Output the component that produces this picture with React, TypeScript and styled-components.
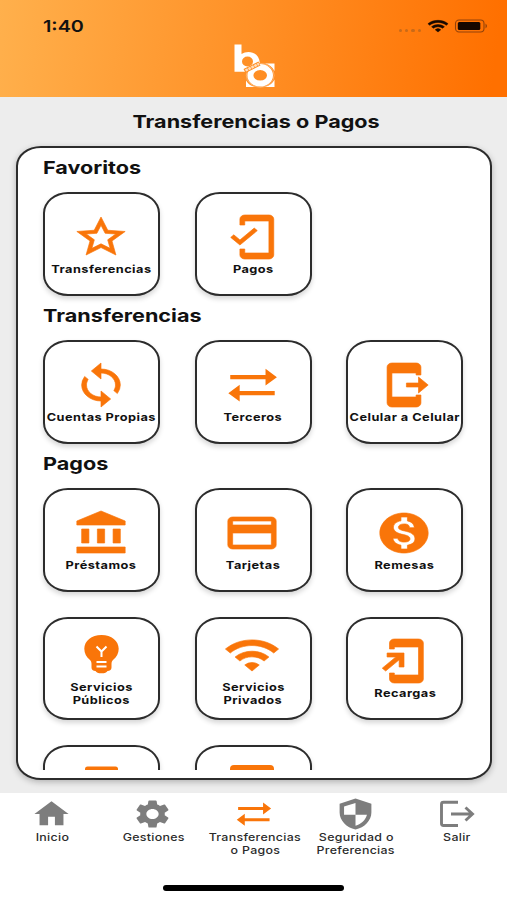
import React from "react";
import styled, { createGlobalStyle } from "styled-components";
import {
  MdMobileFriendly, MdLoop, MdSendToMobile, MdAccountBalance, MdOutlineCreditCard,
  MdMonetizationOn, MdAddToHomeScreen, MdWifi, MdHome, MdSettings, MdStarOutline,
} from "react-icons/md";

const ORANGE = "#f97509";
const GRAY = "#7d7d7d";

const Global = createGlobalStyle`
  *, *::before, *::after { box-sizing: border-box; }
  body { margin: 0; background: #ededed; font-family: Inter, "Liberation Sans", sans-serif; color: #111; }
`;

const Screen = styled.div`
  width: 507px;
  height: 900px;
  display: flex;
  flex-direction: column;
  overflow: hidden;
`;

const Header = styled.header`
  height: 97px;
  flex: none;
  display: flex;
  flex-direction: column;
  align-items: center;
  background: linear-gradient(97deg, #ffb04c 0%, #ff9127 48%, #ff7000 97%);
`;

const StatusBar = styled.div`
  width: 100%;
  height: 43px;
  padding: 10px 18px 0 43px;
  display: flex;
  justify-content: space-between;
`;

const StatusIcons = styled.div`
  display: flex;
  align-items: center;
  height: 32px;
`;

const Text = styled.span<{ $size: number; $weight?: number; $space?: number; $line?: number; $stretch?: number; $left?: boolean }>`
  display: block;
  white-space: nowrap;
  font-size: ${(p) => p.$size}px;
  font-weight: ${(p) => p.$weight ?? 700};
  letter-spacing: ${(p) => p.$space ?? 0}px;
  line-height: ${(p) => p.$line ?? 13}px;
  transform: scaleX(${(p) => p.$stretch ?? 1.2});
  transform-origin: ${(p) => (p.$left ? "left" : "center")};
`;

const Title = styled.h1`
  margin: 0;
  height: 49px;
  flex: none;
  display: flex;
  justify-content: center;
  align-items: center;
  padding-left: 5px;
`;

const Panel = styled.main`
  width: 476px;
  height: 634px;
  flex: none;
  margin-left: 16px;
  border: 2px solid #2c2c2c;
  border-radius: 25px / 20px;
  background: #fff;
  box-shadow: 0 2px 6px rgba(0, 0, 0, 0.25);
  padding-bottom: 8.5px;
`;

const ScrollArea = styled.div`
  height: 100%;
  overflow: hidden;
  padding-left: 25px;
`;

const Heading = styled.h2`
  margin: 0;
  height: 44.4px;
  padding-top: 8px;
`;

const Grid = styled.div`
  display: grid;
  grid-template-columns: repeat(3, 117px);
  column-gap: 34.7px;
  row-gap: 24.8px;
`;

const Tile = styled.div`
  height: 103.6px;
  border: 2px solid #2c2c2c;
  border-radius: 25px / 21px;
  display: flex;
  flex-direction: column;
  align-items: center;
  justify-content: center;
  background: #fff;
  box-shadow: 0 3px 5px rgba(0, 0, 0, 0.16);
`;

const IconBox = styled.div<{ $w: number; $h: number; $color: string }>`
  height: ${(p) => p.$h}px;
  color: ${(p) => p.$color};
  svg { display: block; width: ${(p) => p.$w}px; height: ${(p) => p.$h}px; }
`;

const TileIcon = styled(IconBox)`
  margin: 0 2px 0 0;
  svg[stroke] path:not([fill="none"]) { stroke-width: 0.3px; }
`;

const TileLabel = styled.div`
  margin-top: 2px;
  min-height: 13px;
  display: flex;
  flex-direction: column;
  align-items: center;
`;

const Nav = styled.nav`
  flex: 1;
  margin-top: 13px;
  background: #fff;
  display: flex;
  flex-direction: column;
  justify-content: space-between;
  align-items: center;
`;

const NavItems = styled.div`
  width: 507px;
  padding-left: 2px;
  display: grid;
  grid-template-columns: repeat(5, 101.2px);
`;

const NavItem = styled.div`
  display: flex;
  flex-direction: column;
  align-items: center;
  padding-top: 4px;
  color: #2b2b2b;
`;

const NavIcon = styled(IconBox)`
  margin: 0 2px 0 0;
`;

const HomeBar = styled.div`
  width: 181px;
  height: 6px;
  border-radius: 3px;
  background: #000;
  margin: 0 0 9px 0;
`;

const Arrows = () => (
  <svg viewBox="0 0 24 24" preserveAspectRatio="none" fill="currentColor">
    <path d="M3 7h14.600V3.900l4.700 4.200-4.700 4.200V9.100H3zM21.400 15H6.900V11.900L2.200 16.100l4.700 4.200v-3.200h14.500z" />
  </svg>
);

const Bulb = () => (
  <svg viewBox="0 0 58 48" preserveAspectRatio="none">
    <path fill="currentColor" d="M29.500 4C19.500 4 12.300 10 12.300 17.800C12.300 22.500 14.500 26 17.500 28.500C19 29.800 19.500 31 19.500 33V36.500C19.500 38.500 21 40 23.500 40C24.500 41.500 26 42.300 29.500 42.300C33 42.300 34.500 41.500 35.500 40C38 40 39.500 38.500 39.500 36.500V33C39.500 31 40 29.800 41.500 28.500C44.500 26 46.700 22.500 46.700 17.800C46.700 10 39.500 4 29.500 4Z" />
    <path fill="none" stroke="#fff" strokeWidth="2" d="M24.500 15.500L29.500 20.500L34.500 15.500M29.500 20V26M24.500 31H34.500M24.500 35.500H34.500" />
  </svg>
);

const Shield = () => (
  <svg viewBox="0 0 24 24" preserveAspectRatio="none">
    <path fill="currentColor" fillRule="evenodd" d="M12 1L2.700 4.700v6.300c0 5.550 4 10.740 9.300 12 5.300-1.260 9.300-6.450 9.300-12V4.700zM12 4.200V12.500H5.300V6.700zM12 12.500H18.700C18 16.100 15.500 19 12 20.300z" />
  </svg>
);

const Exit = () => (
  <svg viewBox="0 0 41 34" preserveAspectRatio="none" fill="none" stroke="currentColor" strokeWidth="2.900">
    <path d="M22 5.200H7.500Q5.500 5.200 5.500 7.200V26.500Q5.500 28.500 7.500 28.500H22M15 17H36M29.500 10.500L36.500 17L29.500 23.500" />
  </svg>
);

const Calculator = () => (
  <svg viewBox="0 0 58 48" fill="currentColor" preserveAspectRatio="none">
    <rect x="13" y="1.500" width="33" height="42" rx="2.500" />
  </svg>
);

const Phone = () => (
  <svg viewBox="0 0 58 48" fill="currentColor" preserveAspectRatio="none">
    <rect x="7" y="0" width="44" height="46" rx="4" />
  </svg>
);

const Logo = () => (
  <svg width="42" height="45" viewBox="0 0 42 45">
    <path fill="#fff" d="M13 44V37.500Q16 42.500 22 44ZM41.500 44H32Q39 42 41.500 36.500ZM41.500 20.500V28Q38.500 22 32 20.500Z" />
    <ellipse cx="27.200" cy="32.300" rx="9.800" ry="8.300" fill="none" stroke="#fff" strokeWidth="6" />
    <ellipse cx="27.200" cy="32.300" rx="13.900" ry="12" fill="none" stroke="#fff" strokeWidth=".6" opacity=".5" />
    <path fill="#fff" fillRule="evenodd" d="M1.500 1.500H8.500V11C10.500 9.700 13 9 15.500 9C21.500 9 26.500 13 26.800 20L13 28.800H1.500ZM14.500 13.500A5.500 5 0 1 0 14.500 23.500A5.500 5 0 1 0 14.500 13.500Z" />
    <path d="M11.500 28L26.500 20.500" stroke="#ff9127" strokeWidth="4.500" fill="none" />
    <path d="M12.500 27.500L26 20.800" stroke="#fff" strokeWidth="2.500" strokeDasharray="2.600 .7" fill="none" opacity=".7" />
  </svg>
);

const Dots = styled.div`
  display: flex;
  gap: 3px;
  margin: 8px 6px 0 0;
  i { width: 3.300px; height: 3px; border-radius: 2px; background: #c96a18; }
`;

const SignalIcon = styled(IconBox)`
  margin-right: 5px;
  svg path:not([fill="none"]) { stroke-width: 0.6px; }
`;

const Battery = () => (
  <svg width="35" height="14" viewBox="0 0 35 14">
    <rect x="1.500" y="1" width="28.500" height="12" rx="3.500" fill="none" stroke="#93420a" strokeWidth="1.100" />
    <rect x="3.800" y="3" width="22.500" height="8" rx="1.500" fill="#160800" />
    <path d="M31.500 4.500Q34.500 7 31.500 9.500Z" fill="#93420a" />
  </svg>
);

const fit = { preserveAspectRatio: "none" };

type Item = { icon: React.ReactNode; lines: string[] };

const sections: { title: string; items: Item[] }[] = [
  {
    title: "Favoritos",
    items: [
      { icon: <MdStarOutline {...fit} />, lines: ["Transferencias"] },
      { icon: <MdMobileFriendly {...fit} />, lines: ["Pagos"] },
    ],
  },
  {
    title: "Transferencias",
    items: [
      { icon: <MdLoop {...fit} />, lines: ["Cuentas Propias"] },
      { icon: <Arrows />, lines: ["Terceros"] },
      { icon: <MdSendToMobile {...fit} />, lines: ["Celular a Celular"] },
    ],
  },
  {
    title: "Pagos",
    items: [
      { icon: <MdAccountBalance {...fit} />, lines: ["Préstamos"] },
      { icon: <MdOutlineCreditCard {...fit} />, lines: ["Tarjetas"] },
      { icon: <MdMonetizationOn {...fit} />, lines: ["Remesas"] },
      { icon: <Bulb />, lines: ["Servicios", "Públicos"] },
      { icon: <MdWifi {...fit} />, lines: ["Servicios", "Privados"] },
      { icon: <MdAddToHomeScreen {...fit} />, lines: ["Recargas"] },
      { icon: <Calculator />, lines: [] },
      { icon: <Phone />, lines: [] },
    ],
  },
];

const tabs: (Item & { active?: boolean })[] = [
  { icon: <MdHome {...fit} />, lines: ["Inicio"] },
  { icon: <MdSettings {...fit} />, lines: ["Gestiones"] },
  { icon: <Arrows />, lines: ["Transferencias", "o Pagos"], active: true },
  { icon: <Shield />, lines: ["Seguridad o", "Preferencias"] },
  { icon: <Exit />, lines: ["Salir"] },
];

export default function App() {
  return (
    <Screen>
      <Global />
      <Header>
        <StatusBar>
          <Text $size={16.5} $weight={600} $line={33} $left>1:40</Text>
          <StatusIcons>
            <Dots><i /><i /><i /><i /></Dots>
            <SignalIcon $w={22} $h={18} $color="#160800"><MdWifi {...fit} /></SignalIcon>
            <Battery />
          </StatusIcons>
        </StatusBar>
        <Logo />
      </Header>
      <Title><Text $size={18} $line={24}>Transferencias o Pagos</Text></Title>
      <Panel>
        <ScrollArea>
          {sections.map((s) => (
            <section key={s.title}>
              <Heading><Text $size={18} $line={24} $left>{s.title}</Text></Heading>
              <Grid>
                {s.items.map((item, i) => (
                  <Tile key={i}>
                    <TileIcon $w={58} $h={48} $color={ORANGE}>{item.icon}</TileIcon>
                    <TileLabel>
                      {item.lines.map((l) => <Text key={l} $size={10.8} $space={0.4} $stretch={1.18}>{l}</Text>)}
                    </TileLabel>
                  </Tile>
                ))}
              </Grid>
            </section>
          ))}
        </ScrollArea>
      </Panel>
      <Nav>
        <NavItems>
          {tabs.map((t) => (
            <NavItem key={t.lines[0]}>
              <NavIcon $w={41} $h={34} $color={t.active ? ORANGE : GRAY}>{t.icon}</NavIcon>
              {t.lines.map((l) => <Text key={l} $size={10.7} $weight={500} $space={0.25} $stretch={1.16}>{l}</Text>)}
            </NavItem>
          ))}
        </NavItems>
        <HomeBar />
      </Nav>
    </Screen>
  );
}
